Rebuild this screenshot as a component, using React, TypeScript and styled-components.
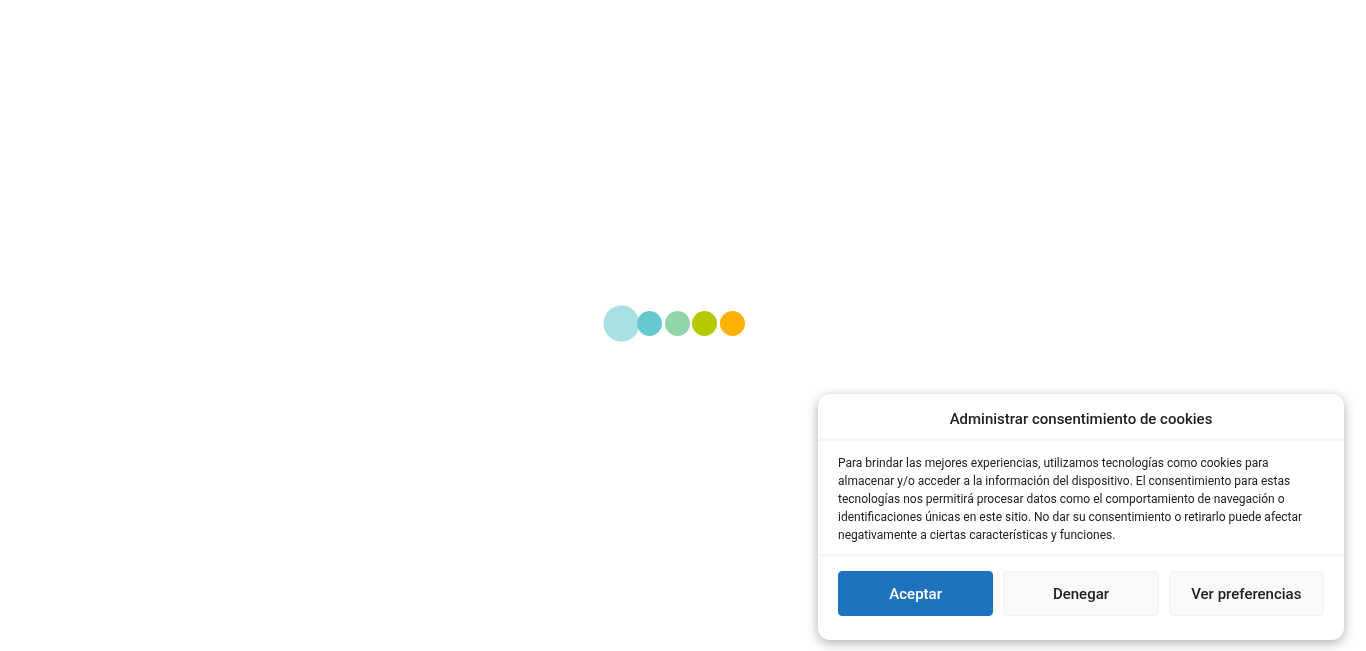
import React from "react";
import styled, { createGlobalStyle } from "styled-components";

const GlobalStyle = createGlobalStyle`
  html, body { margin: 0; padding: 0; background: #ffffff; }
  body { font-family: Roboto, "Liberation Sans", Arial, sans-serif; }
  * { box-sizing: border-box; }
`;

const LoaderScreen = styled.div`
  position: fixed;
  inset: 0;
  display: flex;
  align-items: center;
  justify-content: center;
  padding: 0 12px 5px 0;
  background: #ffffff;
`;

const DotRow = styled.div`
  display: flex;
  align-items: center;
  gap: 2.75px;
`;

const Dot = styled.span<{ $color: string; $scale?: number }>`
  display: block;
  width: 25px;
  height: 25px;
  border-radius: 50%;
  background: ${(p) => p.$color};
  transform: scale(${(p) => p.$scale ?? 1});
  flex: none;
`;

const Banner = styled.div`
  position: fixed;
  right: 22px;
  bottom: 11px;
  width: 526px;
  background: #ffffff;
  border-radius: 12px;
  box-shadow: 0 3px 12px rgba(0, 0, 0, 0.32);
  display: flex;
  flex-direction: column;
  color: #222222;
`;

const Header = styled.div`
  height: 44px;
  display: flex;
  align-items: center;
  justify-content: center;
  padding-top: 6px;
`;

const Title = styled.div`
  font-size: 15px;
  font-weight: 500;
  color: #222222;
`;

const Divider = styled.div`
  height: 3px;
  background: #f7f7f7;
`;

const Body = styled.div`
  padding: 13px 20px 10px 20px;
  font-size: 12px;
  line-height: 18px;
  color: #222222;
`;

const Buttons = styled.div`
  display: grid;
  grid-template-columns: repeat(3, 1fr);
  gap: 10px;
  padding: 14px 20px 24px 20px;
`;

const Button = styled.button<{ $primary?: boolean }>`
  height: 45px;
  border-radius: 4px;
  font-family: Roboto, "Liberation Sans", Arial, sans-serif;
  font-size: 15px;
  font-weight: 500;
  cursor: pointer;
  background: ${(p) => (p.$primary ? "#1e73be" : "#f9f9f9")};
  color: ${(p) => (p.$primary ? "#ffffff" : "#222222")};
  border: 1px solid ${(p) => (p.$primary ? "#1e73be" : "#f2f2f2")};
`;

export default function App() {
  return (
    <>
      <GlobalStyle />
      <LoaderScreen>
        <DotRow>
          <Dot $color="#a9e0e4" $scale={1.44} />
          <Dot $color="#67c9d0" />
          <Dot $color="#92d4a9" />
          <Dot $color="#b5c900" />
          <Dot $color="#ffb100" />
        </DotRow>
      </LoaderScreen>
      <Banner>
        <Header>
          <Title>Administrar consentimiento de cookies</Title>
        </Header>
        <Divider />
        <Body>
          Para brindar las mejores experiencias, utilizamos tecnologías como cookies para
          almacenar y/o acceder a la información del dispositivo. El consentimiento para estas
          tecnologías nos permitirá procesar datos como el comportamiento de navegación o
          identificaciones únicas en este sitio. No dar su consentimiento o retirarlo puede
          afectar negativamente a ciertas características y funciones.
        </Body>
        <Divider />
        <Buttons>
          <Button $primary>Aceptar</Button>
          <Button>Denegar</Button>
          <Button>Ver preferencias</Button>
        </Buttons>
      </Banner>
    </>
  );
}
